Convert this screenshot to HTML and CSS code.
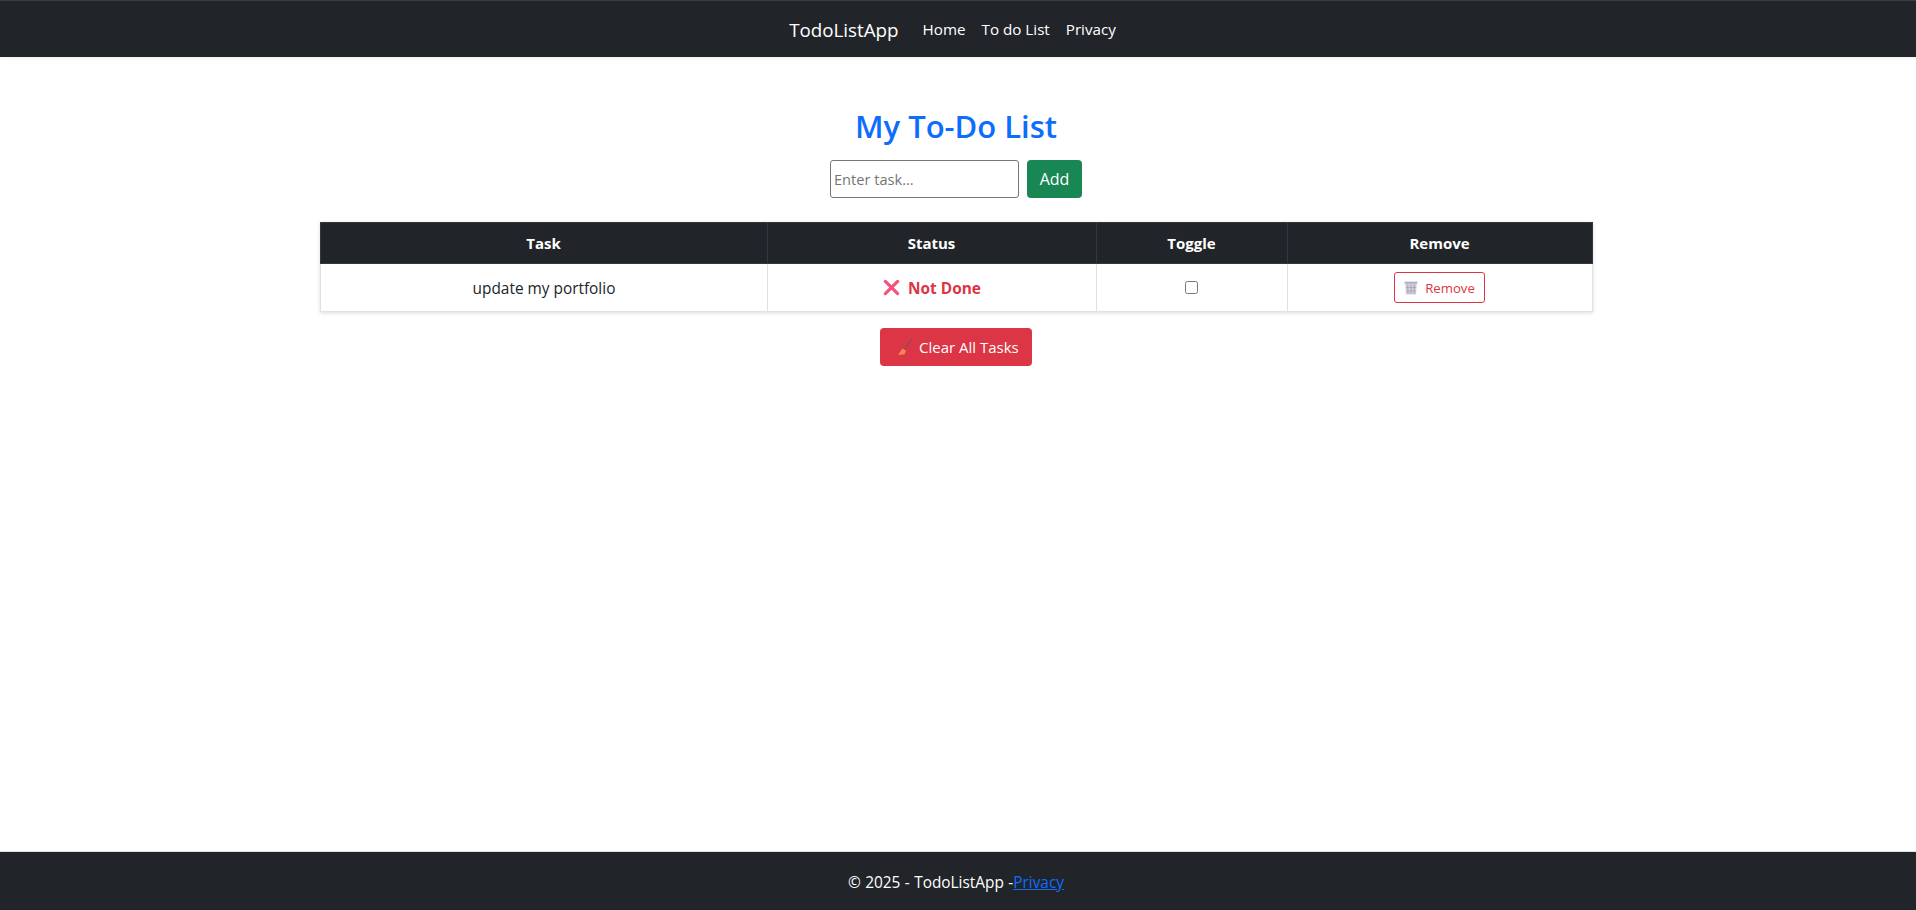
FILE: index.html
```html
<!DOCTYPE html>
<html lang="en">
<head>
<meta charset="utf-8">
<title>TodoListApp</title>
<link rel="stylesheet" href="styles.css">
</head>
<body>
<header class="navbar">
  <a class="brand" href="#">TodoListApp</a>
  <nav class="nav">
    <a href="#">Home</a>
    <a href="#">To do List</a>
    <a href="#">Privacy</a>
  </nav>
</header>
<main class="main">
  <h1 class="title">My To-Do List</h1>
  <form class="add-form">
    <input class="task-input" type="text" placeholder="Enter task...">
    <button class="btn btn-add" type="button">Add</button>
  </form>
  <table class="tasks">
    <colgroup>
      <col class="col-task"><col class="col-status"><col class="col-toggle"><col class="col-remove">
    </colgroup>
    <thead>
      <tr><th>Task</th><th>Status</th><th>Toggle</th><th>Remove</th></tr>
    </thead>
    <tbody>
      <tr>
        <td class="task-name">update my portfolio</td>
        <td class="status">
          <svg class="icon-x" viewBox="0 0 18 18" aria-hidden="true"><path d="M2.500 2.500 15.500 15.500M15.500 2.500 2.500 15.500"/></svg>
          <span>Not Done</span>
        </td>
        <td><input class="check" type="checkbox"></td>
        <td>
          <button class="btn-remove" type="button">
            <svg class="icon-bin" viewBox="0 0 14 14" aria-hidden="true">
              <path class="bin-body" d="M1.200 2h11.600l-.8 11.600H2z"/>
              <path class="bin-rim" d="M.6.600h12.800v2H.6z"/>
              <path class="bin-lines" d="M3.600 3.500l.4 9.500M7 3.500V13M10.400 3.500 10 13M2 6.500h10M2.300 10h9.400"/>
            </svg>
            <span>Remove</span>
          </button>
        </td>
      </tr>
    </tbody>
  </table>
  <button class="btn btn-clear" type="button">
    <svg class="icon-broom" viewBox="0 0 16 16" aria-hidden="true">
      <path class="broom-handle" d="M14.500.5 7.500 10.500"/>
      <path class="broom-head" d="M5.500 9.500 9 11.500 7.500 15.500 1 15.800z"/>
    </svg>
    <span>Clear All Tasks</span>
  </button>
</main>
<footer class="footer">
  <span class="footer-text">© 2025 - TodoListApp -</span><a href="#">Privacy</a>
</footer>
</body>
</html>
```

FILE: styles.css
```css
* { box-sizing: border-box; }
html, body { height: 100%; }
body {
  margin: 0;
  min-height: 910px;
  display: flex;
  flex-direction: column;
  font-family: "Open Sans", "Noto Sans", sans-serif;
  font-size: 15.4px;
  line-height: 24px;
  color: #212529;
  background: #fff;
}
.navbar {
  height: 57px;
  flex: none;
  display: flex;
  align-items: center;
  justify-content: center;
  background: #212529;
  border-top: 1px solid #3a3f43;
  box-shadow: 0 1px 3px rgba(0,0,0,.08);
  padding: 2px 11px 0 0;
}
.brand {
  color: #fff;
  font-size: 18.800px;
  text-decoration: none;
  margin-right: 24px;
}
.nav { display: flex; gap: 16px; font-size: 15.200px; margin-bottom: 2px; }
.nav a { color: #fff; text-decoration: none; }
.main {
  flex: 1;
  display: flex;
  flex-direction: column;
  align-items: center;
  padding: 49px 4px 0 0;
}
.title {
  margin: 0;
  color: #0d6efd;
  font-size: 31px;
  font-weight: 600;
  line-height: 40px;
}
.add-form {
  display: flex;
  gap: 8px;
  margin-top: 14px;
  align-items: stretch;
}
.task-input {
  width: 189px;
  height: 38px;
  border: 1px solid #767676;
  border-radius: 3px;
  padding: 1px 3px;
  font: inherit;
  font-size: 14.600px;
  color: #212529;
}
.task-input::placeholder { color: #757575; }
.btn {
  border: 0;
  border-radius: 4px;
  color: #fff;
  font: inherit;
  display: flex;
  align-items: center;
}
.btn-add { width: 55px; height: 38px; background: #198754; justify-content: center; font-size: 16px; }
.tasks {
  width: 1272px;
  margin-top: 24px;
  border-collapse: collapse;
  table-layout: fixed;
  box-shadow: 0 1px 4px rgba(0,0,0,.14);
  text-align: center;
}
.col-task { width: 447px; }
.col-status { width: 329px; }
.col-toggle { width: 191px; }
.col-remove { width: 305px; }
.tasks th {
  height: 41px;
  padding: 0;
  background: #212529;
  color: #fff;
  font-weight: 700;
  font-size: 15px;
  border: 1px solid #32383e;
}
.tasks td {
  height: 48px;
  padding: 0;
  border: 1px solid #dee2e6;
  vertical-align: middle;
}
.tasks .task-name { padding: 2px 0 0 1px; }
.tasks .status { color: #dc3545; font-weight: 700; padding: 2px 0 0 1px; }
.status span { vertical-align: middle; }
.icon-x { width: 17px; height: 17px; vertical-align: middle; margin: 0 4px 2px 0; }
.icon-x path { fill: none; stroke: #f8527a; stroke-width: 3.400; stroke-linecap: round; }
.check { width: 13px; height: 13px; margin: 0 0 2px; vertical-align: middle; }
.btn-remove {
  display: inline-flex;
  align-items: center;
  justify-content: center;
  gap: 7px;
  width: 91px;
  height: 31px;
  vertical-align: middle;
  background: #fff;
  border: 1px solid #dc3545;
  border-radius: 3px;
  color: #dc3545;
  font: inherit;
  font-size: 13.200px;
  padding: 0;
}
.icon-bin { width: 14px; height: 14px; flex: none; }
.bin-body { fill: #cfcfdd; }
.bin-rim { fill: #b0b0c2; }
.bin-lines { fill: none; stroke: #a3a3b7; stroke-width: .8; }
.btn-clear {
  width: 152px;
  height: 38px;
  margin-top: 16px;
  background: #dc3545;
  padding: 0 0 0 17px;
  gap: 6px;
  font-size: 15px;
}
.icon-broom { width: 16px; height: 16px; flex: none; }
.broom-handle { fill: none; stroke: #80505c; stroke-width: 1.300; }
.broom-head { fill: #f6854c; }
.footer {
  height: 59px;
  flex: none;
  display: flex;
  align-items: center;
  justify-content: center;
  background: #212529;
  border-top: 1px solid #dee2e6;
  color: #fff;
  padding: 4px 4px 0 0;
}
.footer-text { word-spacing: .4px; }
.footer a { color: #0d6efd; }
```
